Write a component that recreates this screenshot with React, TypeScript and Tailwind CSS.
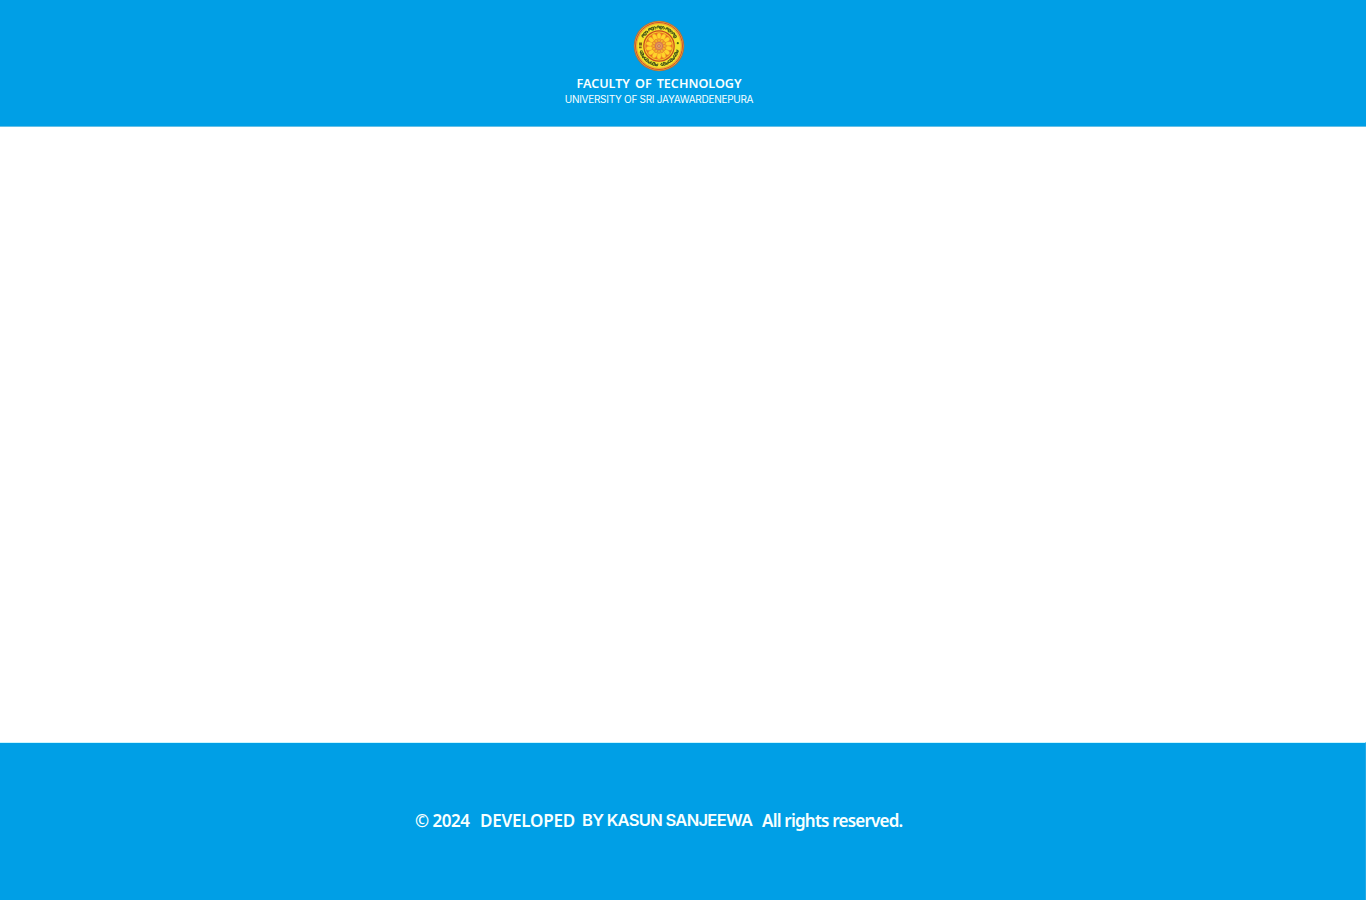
const petals = (count: number) => Array.from({ length: count }, (_, i) => (i * 360) / count);

const glyphs = [
  'M-1.3 1.2Q-1.6-1.4 0-1.2T1.1 .9M-.5 .2L1.2-.6',
  'M-1.2-.8Q1.6-1.8 1.2 .4T-1 1.1L0-.2',
  'M-1.3 .6Q-.8-1.8 .2-.7T1.4 .7M-.4 1.2H.8',
];

function Lettering({ angles }: { angles: number[] }) {
  return (
    <g fill="none" stroke="#46561a" strokeWidth="1">
      {angles.map((angle, i) => (
        <path key={angle} d={glyphs[i % 3]} transform={`rotate(${angle}) translate(0 -18.8)`} />
      ))}
    </g>
  );
}

function Crest() {
  return (
    <svg viewBox="-26 -26 52 52" className="block size-[52px]" role="img" aria-label="University crest">
      <circle r="25.3" fill="#a9713f" />
      <circle r="24.4" fill="#efb035" />
      <circle r="23.5" fill="none" stroke="#d2502c" strokeWidth="1" />
      <circle r="22.2" fill="#f4e32c" stroke="#e8a52b" strokeWidth="0.7" />
      <Lettering angles={[-57, -49, -41, -29, -21, -13, -2, 6, 14, 26, 34, 42, 51, 59]} />
      <Lettering angles={[107, 115, 123, 131, 139, 147, 155, 163, 171, 188, 196, 204, 212, 220, 228, 236, 244, 252]} />
      <circle cx="18.8" cy="-2.8" r="1.1" fill="#526019" />
      <path d="M-20-3.5h3v3h-3zM-20 .5h2.7v1.7H-20z" fill="#806018" />
      <circle r="15.2" fill="#f6cf28" stroke="#c9481f" strokeWidth="1.2" />
      <circle r="13.6" fill="#ec6f22" />
      {petals(14).map((angle) => (
        <ellipse key={angle} cy="-9.5" rx="2.3" ry="3.8" fill="#ffd32a" stroke="#e88024" strokeWidth="0.4" transform={`rotate(${angle})`} />
      ))}
      <circle r="7.6" fill="#f4ad28" />
      {petals(12).map((angle) => (
        <ellipse key={angle} cy="-5.5" rx="1.3" ry="1.8" fill="#f4b92b" stroke="#df612d" strokeWidth="0.45" transform={`rotate(${angle})`} />
      ))}
      <circle r="3.7" fill="#e99b55" stroke="#c97160" strokeWidth="0.9" />
      <circle r="1.4" fill="#e3b580" stroke="#b85748" strokeWidth="0.6" />
    </svg>
  );
}

export default function App() {
  return (
    <div className="flex h-[900px] w-full flex-col bg-white font-['Noto_Sans',sans-serif] text-[#f8ffff]">
      <header className="h-[127px] shrink-0 border-b border-[#65bfe6] bg-[#009fe6] pr-[48px] pt-5">
        <div className="flex flex-col items-center whitespace-nowrap">
          <Crest />
          <h1 className="mt-1 flex h-4 items-center gap-[5px] text-[12.6px] leading-4 font-semibold">
            <span>FACULTY</span><span>OF</span><span>TECHNOLOGY</span>
          </h1>
          <p className="h-4 font-['Inter',sans-serif] text-[10px] leading-[15px] tracking-[-0.28px]">UNIVERSITY OF SRI JAYAWARDENEPURA</p>
        </div>
      </header>
      <main className="flex-1" />
      <footer className="flex h-[158px] shrink-0 border-t border-r border-t-[#c9f6ff] border-r-[#20a9e7] bg-[#009fe6] pt-[65px] pl-[415px] text-[17px] leading-6 font-semibold whitespace-nowrap">
        <span className="w-[65px] pt-px tracking-[-0.5px]">© 2024</span>
        <span className="w-[102px] pt-px tracking-[-0.2px]">DEVELOPED</span>
        <span className="w-[180px] font-['Inter',sans-serif] text-[16.5px] tracking-[-0.7px]">BY KASUN SANJEEWA</span>
        <span className="pt-px tracking-[-0.78px]">All rights reserved.</span>
      </footer>
    </div>
  );
}
